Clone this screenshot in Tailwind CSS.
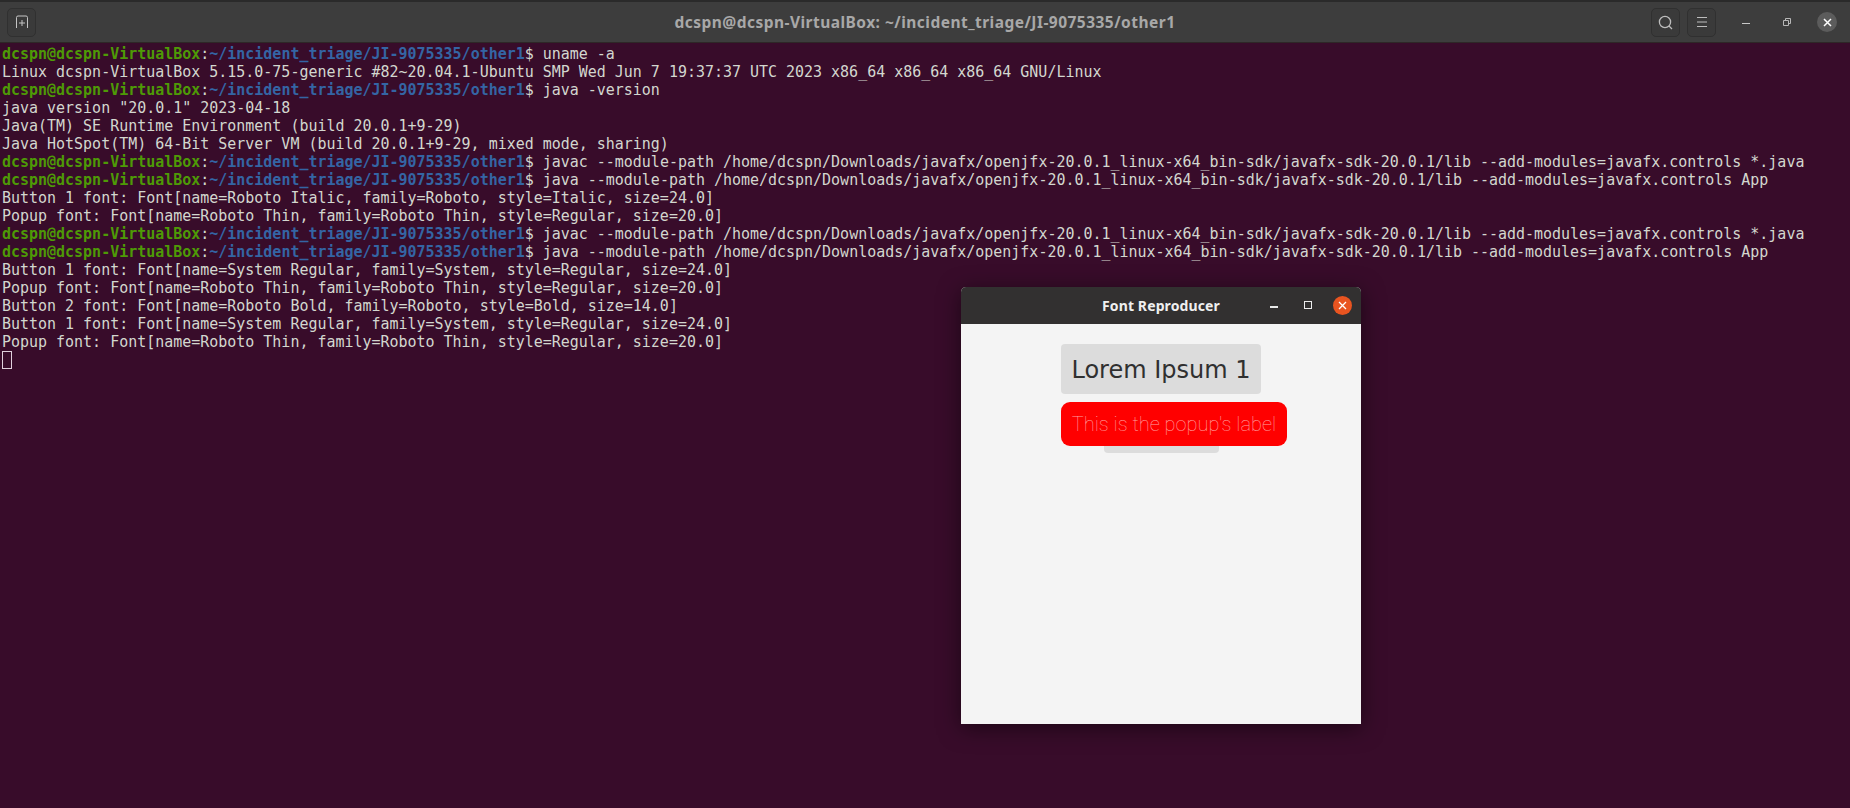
<!DOCTYPE html>
<html lang="en">
<head>
    <meta charset="UTF-8">
    <title>dcspn@dcspn-VirtualBox: ~/incident_triage/JI-9075335/other1</title>
    <script src="https://cdn.jsdelivr.net/npm/@tailwindcss/browser@4"></script>
</head>
<body class="relative w-[1850px] h-[808px] overflow-hidden bg-[#380c2a] font-['DejaVu_Sans_Mono',monospace]">
    <!-- Terminal header -->
    <header class="h-[43px] bg-[#3d3d3d] border-t-2 border-t-[#2a2a2a] border-b border-b-[#2e2727] grid grid-cols-[1fr_auto_1fr] items-center px-[13px]">
        <button class="w-[29px] h-[29px] -ml-[6px] rounded-[5px] bg-[#3a3a3a] border border-[#303030] flex items-center justify-center text-[#c4c4c4]">
            <svg class="w-4 h-4" viewBox="0 0 16 16" fill="none" stroke="currentColor" stroke-width="1">
                <path d="M2.5 14V3.5a1.5 1.5 0 0 1 1.5-1.5h8a1.5 1.5 0 0 1 1.5 1.5V14M8 6v6M5 9h6"/>
            </svg>
        </button>
        <h1 class="pt-px text-[15.5px] font-bold tracking-[0.47px] text-[#a8a8a8] font-['Noto_Sans',sans-serif]">dcspn@dcspn-VirtualBox: ~/incident_triage/JI-9075335/other1</h1>
        <div class="flex items-center justify-end">
            <button class="w-[29px] h-[29px] rounded-[5px] bg-[#3a3a3a] border border-[#303030] flex items-center justify-center text-[#bdbdbd]">
                <svg class="w-[17px] h-[17px]" viewBox="0 0 17 17" fill="none" stroke="currentColor" stroke-width="1.3">
                    <circle cx="8" cy="8" r="5.6"/><path d="M12 12l3 3"/>
                </svg>
            </button>
            <button class="w-[29px] h-[29px] ml-[7px] rounded-[5px] bg-[#3a3a3a] border border-[#303030] flex items-center justify-center text-[#bdbdbd]">
                <svg class="w-4 h-4" viewBox="0 0 16 16" stroke="currentColor" stroke-width="1">
                    <path d="M3 3.5h10M3 8h10M3 12.5h10"/>
                </svg>
            </button>
            <button class="w-2 h-px bg-[#c8c8c8] ml-[26px] mt-[3px]"></button>
            <svg class="w-2 h-2 ml-[33px] text-[#b8b8b8]" viewBox="0 0 8 8" fill="none" stroke="currentColor" stroke-width="1">
                <path d="M.5 2.5h5v5h-5zM2.500 2.500V.5h5v5h-2"/>
            </svg>
            <button class="w-5 h-5 ml-[26px] rounded-full bg-[#5c5c5c] flex items-center justify-center text-white">
                <svg class="w-[9px] h-[9px]" viewBox="0 0 9 9" stroke="currentColor" stroke-width="1.500"><path d="M1 1l7 7M8 1l-7 7"/></svg>
            </button>
        </div>
    </header>

    <!-- Terminal output -->
    <main class="pt-[2px] pl-[2px] text-[14.97px] leading-[18px] text-[#d3d7cf] [&>div]:whitespace-pre">
        <div><b class="text-[#4e9a06]">dcspn@dcspn-VirtualBox</b>:<b class="text-[#3465a4]">~/incident_triage/JI-9075335/other1</b>$ uname -a</div>
        <div>Linux dcspn-VirtualBox 5.15.0-75-generic #82~20.04.1-Ubuntu SMP Wed Jun 7 19:37:37 UTC 2023 x86_64 x86_64 x86_64 GNU/Linux</div>
        <div><b class="text-[#4e9a06]">dcspn@dcspn-VirtualBox</b>:<b class="text-[#3465a4]">~/incident_triage/JI-9075335/other1</b>$ java -version</div>
        <div>java version "20.0.1" 2023-04-18</div>
        <div>Java(TM) SE Runtime Environment (build 20.0.1+9-29)</div>
        <div>Java HotSpot(TM) 64-Bit Server VM (build 20.0.1+9-29, mixed mode, sharing)</div>
        <div><b class="text-[#4e9a06]">dcspn@dcspn-VirtualBox</b>:<b class="text-[#3465a4]">~/incident_triage/JI-9075335/other1</b>$ javac --module-path /home/dcspn/Downloads/javafx/openjfx-20.0.1_linux-x64_bin-sdk/javafx-sdk-20.0.1/lib --add-modules=javafx.controls *.java</div>
        <div><b class="text-[#4e9a06]">dcspn@dcspn-VirtualBox</b>:<b class="text-[#3465a4]">~/incident_triage/JI-9075335/other1</b>$ java --module-path /home/dcspn/Downloads/javafx/openjfx-20.0.1_linux-x64_bin-sdk/javafx-sdk-20.0.1/lib --add-modules=javafx.controls App</div>
        <div>Button 1 font: Font[name=Roboto Italic, family=Roboto, style=Italic, size=24.0]</div>
        <div>Popup font: Font[name=Roboto Thin, family=Roboto Thin, style=Regular, size=20.0]</div>
        <div><b class="text-[#4e9a06]">dcspn@dcspn-VirtualBox</b>:<b class="text-[#3465a4]">~/incident_triage/JI-9075335/other1</b>$ javac --module-path /home/dcspn/Downloads/javafx/openjfx-20.0.1_linux-x64_bin-sdk/javafx-sdk-20.0.1/lib --add-modules=javafx.controls *.java</div>
        <div><b class="text-[#4e9a06]">dcspn@dcspn-VirtualBox</b>:<b class="text-[#3465a4]">~/incident_triage/JI-9075335/other1</b>$ java --module-path /home/dcspn/Downloads/javafx/openjfx-20.0.1_linux-x64_bin-sdk/javafx-sdk-20.0.1/lib --add-modules=javafx.controls App</div>
        <div>Button 1 font: Font[name=System Regular, family=System, style=Regular, size=24.0]</div>
        <div>Popup font: Font[name=Roboto Thin, family=Roboto Thin, style=Regular, size=20.0]</div>
        <div>Button 2 font: Font[name=Roboto Bold, family=Roboto, style=Bold, size=14.0]</div>
        <div>Button 1 font: Font[name=System Regular, family=System, style=Regular, size=24.0]</div>
        <div>Popup font: Font[name=Roboto Thin, family=Roboto Thin, style=Regular, size=20.0]</div>
        <div class="w-[10px] h-[18px] border border-[#e0d0dc]"></div>
    </main>

    <!-- Floating app window -->
    <section class="absolute left-[961px] top-[287px] w-[400px] h-[437px] rounded-t-[5px] bg-[#f4f4f4] shadow-[0_4px_22px_rgba(0,0,0,0.5)] font-['DejaVu_Sans',sans-serif]">
        <div class="h-[37px] rounded-t-[5px] bg-[#323030] relative flex items-center justify-center">
            <h2 class="text-[14px] font-bold tracking-[0.12px] text-[#efefef] font-['Noto_Sans',sans-serif]">Font Reproducer</h2>
            <div class="absolute right-[9px] top-[9px] flex items-center">
                <span class="w-2 h-[2px] bg-[#e8e8e8] mt-[3px]"></span>
                <span class="w-[8px] h-[8px] ml-[26px] border border-[#ececec] -mt-[2px]"></span>
                <span class="w-[19px] h-[19px] ml-[21px] rounded-full bg-[#e95420] flex items-center justify-center text-white">
                    <svg class="w-[9px] h-[9px]" viewBox="0 0 9 9" stroke="currentColor" stroke-width="1.300"><path d="M1 1l7 7M8 1l-7 7"/></svg>
                </span>
            </div>
        </div>
        <div class="relative flex flex-col items-center pt-5">
            <button class="w-[200px] h-[50px] pt-[2px] rounded-[4px] bg-[#dcdcdc] text-[24px] text-[#303030]">Lorem Ipsum 1</button>
            <button class="w-[115px] h-[50px] mt-[9px] rounded-[4px] bg-[#dcdcdc]"></button>
            <!-- popup over the second button -->
            <div class="absolute left-[100px] top-[78px] w-[226px] h-[44px] rounded-[9px] bg-[#ff0000] flex items-center justify-center text-[20px] font-thin text-[#ffa0a0] font-['Roboto',sans-serif]">This is the popup's label</div>
        </div>
    </section>
</body>
</html>
